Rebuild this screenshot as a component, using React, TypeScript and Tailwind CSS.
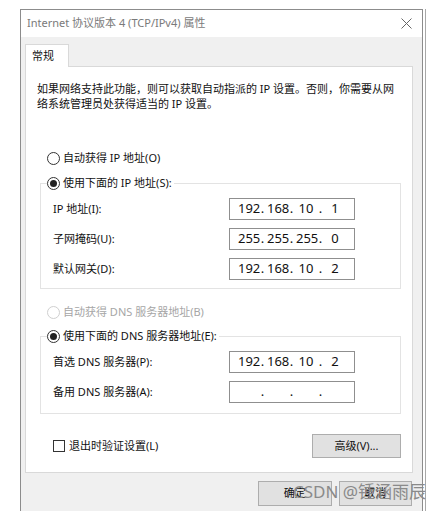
const font = "font-['Noto_Sans','Noto_Sans_CJK_SC',sans-serif]";

const Radio = ({ label, checked, disabled }: { label: string; checked?: boolean; disabled?: boolean }) => (
  <div className={`flex items-center gap-[3px] h-[18px] ${disabled ? "text-[#a6a6a6]" : "text-[#111]"}`}>
    <span
      className={`w-[13px] h-[13px] rounded-full border flex items-center justify-center bg-white ${
        disabled ? "border-[#cfcfcf]" : "border-[#333]"
      }`}
    >
      {checked && <span className="w-[7px] h-[7px] rounded-full bg-[#222]" />}
    </span>
    <span>{label}</span>
  </div>
);

const IpBox = ({ parts }: { parts: string[] }) => (
  <div className="w-[126px] h-[22px] border border-[#8f8f8f] bg-white flex items-center pl-[8px] text-[13px] text-[#111] font-['Noto_Sans',sans-serif]">
    {parts.map((p, i) => (
      <div key={i} className="flex">
        <span className="w-[20px] text-center">{p}</span>
        {i < 3 && <span className="w-[9px] text-center">.</span>}
      </div>
    ))}
  </div>
);

const Row = ({ label, parts }: { label: string; parts: string[] }) => (
  <div className="flex items-center h-[22px]">
    <span className="w-[188px] pl-[12px] text-[#111]">{label}</span>
    <IpBox parts={parts} />
  </div>
);

const Button = ({ text, w, h }: { text: string; w: string; h: string }) => (
  <div className={`${w} ${h} bg-[#e1e1e1] border border-[#adadad] flex items-center justify-center text-[#111]`}>
    {text}
  </div>
);

export default function App() {
  return (
    <div className={`relative w-[445px] h-[511px] bg-white overflow-hidden pt-[9px] text-[11px] ${font}`}>
      <div className="ml-[20px] w-[403px] h-[502px] border border-b-0 border-[#8c8c8c] shadow-[2px_0_0_0_#fff,3px_0_0_0_#a8a8a8] flex flex-col">
        {/* title bar */}
        <div className="h-[27px] bg-white flex items-center justify-between pl-[6px] pr-[10px]">
          <span className="text-[#7a7a7a]">Internet 协议版本 4 (TCP/IPv4) 属性</span>
          <svg width="11" height="11" viewBox="0 0 11 11">
            <path d="M0.5 0.5L10.5 10.5M10.5 0.5L0.5 10.5" stroke="#666" strokeWidth="1" />
          </svg>
        </div>

        <div className="flex-1 bg-[#f0f0f0] pl-[4px] pr-[10px] pt-[7px]">
          {/* tab */}
          <div className="relative z-10 -mb-px w-[44px] h-[23px] bg-white border border-b-0 border-[#d9d9d9] flex items-center pl-[6px] text-[#111]">
            常规
          </div>

          {/* tab panel */}
          <div className="w-[388px] h-[407px] bg-white border border-[#d9d9d9] flex flex-col">
            <p className="mt-[14px] ml-[11px] leading-[15px] text-[#111]">
              如果网络支持此功能，则可以获取自动指派的 IP 设置。否则，你需要从网
              <br />
              络系统管理员处获得适当的 IP 设置。
            </p>

            <div className="mt-[38px] ml-[21px]">
              <Radio label="自动获得 IP 地址(O)" />
            </div>

            <fieldset className="mt-[7px] ml-[14px] w-[361px] border border-[#e3e3e3] pb-[8px] flex flex-col gap-[8px]">
              <legend className="ml-[6px] pr-[2px] bg-white">
                <Radio label="使用下面的 IP 地址(S):" checked />
              </legend>
              <div className="mt-[6px]">
                <Row label="IP 地址(I):" parts={["192", "168", "10", "1"]} />
              </div>
              <Row label="子网掩码(U):" parts={["255", "255", "255", "0"]} />
              <Row label="默认网关(D):" parts={["192", "168", "10", "2"]} />
            </fieldset>

            <div className="mt-[14px] ml-[21px]">
              <Radio label="自动获得 DNS 服务器地址(B)" disabled />
            </div>

            <fieldset className="mt-[6px] ml-[14px] w-[361px] border border-[#e3e3e3] pb-[10px] flex flex-col gap-[8px]">
              <legend className="ml-[6px] pr-[2px] bg-white">
                <Radio label="使用下面的 DNS 服务器地址(E):" checked />
              </legend>
              <div className="mt-[6px]">
                <Row label="首选 DNS 服务器(P):" parts={["192", "168", "10", "2"]} />
              </div>
              <Row label="备用 DNS 服务器(A):" parts={["", "", "", ""]} />
            </fieldset>

            <div className="mt-[20px] flex items-center justify-between pl-[27px] pr-[11px]">
              <div className="flex items-center gap-[4px] text-[#111]">
                <span className="w-[12px] h-[12px] border border-[#333] bg-white" />
                <span>退出时验证设置(L)</span>
              </div>
              <Button text="高级(V)..." w="w-[89px]" h="h-[24px]" />
            </div>
          </div>

          {/* dialog buttons */}
          <div className="mt-[8px] pl-[233px] flex gap-[7px]">
            <Button text="确定" w="w-[75px]" h="h-[25px]" />
            <Button text="取消" w="w-[75px]" h="h-[25px]" />
          </div>
        </div>
      </div>

      {/* watermark */}
      <div className="absolute left-[293px] top-[480px] text-[17px] leading-[24px] text-[#8a8a8a] whitespace-nowrap font-['Noto_Sans','Noto_Sans_CJK_SC',sans-serif]">
        CSDN @锺涵雨辰
      </div>
    </div>
  );
}
